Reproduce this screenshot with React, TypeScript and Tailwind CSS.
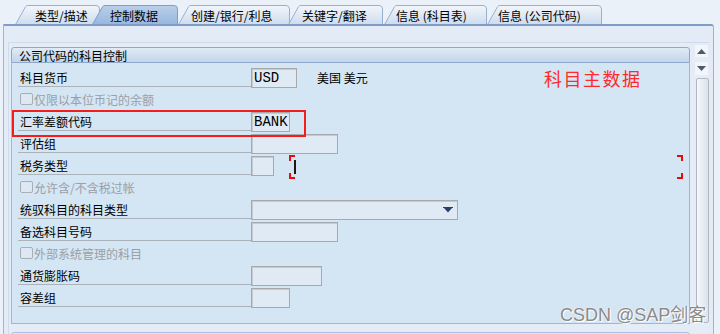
import type { ReactNode } from "react";

type Tab = { label: string; w: number; cls: string; pl: string; active?: boolean };

const tabs: Tab[] = [
  { label: "类型/描述", w: 85, cls: "w-[85px]", pl: "pl-[20px]" },
  { label: "控制数据", w: 86, cls: "w-[86px] -ml-[8px] z-10", pl: "pl-[18px]", active: true },
  { label: "创建/银行/利息", w: 112, cls: "w-[112px]", pl: "pl-[13px]" },
  { label: "关键字/翻译", w: 95, cls: "w-[95px] -ml-[2px]", pl: "pl-[14px]" },
  { label: "信息 (科目表)", w: 103, cls: "w-[103px] ml-[1px]", pl: "pl-[12px]" },
  { label: "信息 (公司代码)", w: 115, cls: "w-[115px]", pl: "pl-[11px]" },
];

type Row =
  | { kind: "field"; label: string; box: string; value?: string; select?: boolean; after?: ReactNode }
  | { kind: "check"; label: string };

const rows: Row[] = [
  { kind: "field", label: "科目货币", box: "w-[46px]", value: "USD", after: <span className="ml-[20px] self-center pt-[3px]">美国 美元</span> },
  { kind: "check", label: "仅限以本位币记的余额" },
  { kind: "field", label: "汇率差额代码", box: "w-[39px]", value: "BANK" },
  { kind: "field", label: "评估组", box: "w-[87px]" },
  { kind: "field", label: "税务类型", box: "w-[23px]" },
  { kind: "check", label: "允许含/不含税过帐" },
  { kind: "field", label: "统驭科目的科目类型", box: "w-[207px]", select: true },
  { kind: "field", label: "备选科目号码", box: "w-[87px]" },
  { kind: "check", label: "外部系统管理的科目" },
  { kind: "field", label: "通货膨胀码", box: "w-[71px]" },
  { kind: "field", label: "容差组", box: "w-[39px]" },
];

function TabItem({ tab }: { tab: Tab }) {
  const w = tab.w;
  const grad = tab.active ? "tabOn" : "tabOff";
  return (
    <div className={`relative h-[19px] shrink-0 ${tab.cls}`}>
      <svg className="absolute inset-0" width={w} height="19" viewBox={`0 0 ${w} 19`}>
        <path
          d={`M0.5 19.5 L10.5 1.8 Q11.3 0.5 13 0.5 L${w - 4} 0.5 Q${w - 0.5} 0.5 ${w - 0.5} 4 L${w - 0.5} 19.5 Z`}
          fill={`url(#${grad})`}
          stroke={tab.active ? "#7f9dc7" : "#98b0cf"}
        />
      </svg>
      <span className={`relative block leading-[19px] pt-[1px] text-[12px] text-black ${tab.pl}`}>{tab.label}</span>
    </div>
  );
}

function Field({ row }: { row: Extract<Row, { kind: "field" }> }) {
  return (
    <div className="flex items-end h-[22px]">
      <div className="w-[233px] ml-[6px] h-[21px] border-b border-[#acb2b9] pl-[2px] leading-[20px] pt-[2px]">{row.label}</div>
      <div
        className={`relative h-[20px] -mb-[1px] border border-[#a7a9ac] bg-[#dfeaf5] shadow-[inset_1px_1px_0_#c5cad0] pl-[2px] font-['Liberation_Mono',monospace] text-[14px] leading-[18px] ${row.box}`}
      >
        {row.value}
        {row.select && (
          <svg className="absolute right-[4px] top-[6px]" width="10" height="6" viewBox="0 0 10 6">
            <rect x="0" y="0" width="10" height="1" fill="#2c3e6a" />
            <path d="M1 1 L9 1 L5 5.5 Z" fill="#2c3e6a" />
          </svg>
        )}
      </div>
      {row.after}
    </div>
  );
}

function Check({ label }: { label: string }) {
  return (
    <div className="flex items-center h-[22px] pl-[8px] pt-[2px]">
      <div className="w-[13px] h-[12px] rounded-[2px] border border-[#a9aeb5] bg-[#dde8f3]" />
      <span className="ml-[1px] text-[#9aa0a7] leading-[20px] pt-[1px]">{label}</span>
    </div>
  );
}

function Arrow({ up }: { up?: boolean }) {
  return (
    <svg width="9" height="5" viewBox="0 0 9 5">
      <path d={up ? "M0 5 L9 5 L4.5 0 Z" : "M0 0 L9 0 L4.5 5 Z"} fill="#4c5a6a" />
    </svg>
  );
}

export default function App() {
  return (
    <div className="relative w-[720px] h-[334px] overflow-hidden bg-[#eaf1f8] font-['Noto_Sans_CJK_SC',sans-serif] text-[12px] text-black">
      <svg width="0" height="0" className="absolute">
        <defs>
          <linearGradient id="tabOff" x1="0" y1="0" x2="0" y2="1">
            <stop offset="0" stopColor="#f2f6fb" />
            <stop offset="1" stopColor="#cddcee" />
          </linearGradient>
          <linearGradient id="tabOn" x1="0" y1="0" x2="0" y2="1">
            <stop offset="0" stopColor="#b9cfe9" />
            <stop offset="1" stopColor="#98b7de" />
          </linearGradient>
        </defs>
      </svg>

      {/* tabs */}
      <div className="flex items-end h-[24px] pl-[15px]">
        {tabs.map(t => (
          <TabItem key={t.label} tab={t} />
        ))}
      </div>

      {/* panel */}
      <div className="ml-[3px] w-[711px] h-[310px] border-t-2 border-t-[#7f9dc7] border-x border-x-[#9db4d3] rounded-tr-[3px] bg-[#e3ecf6] pt-[16px] pl-[4px] pr-[4px]">
        <div className="flex h-full border-t border-l border-[#cddbeb] bg-[#e4edf7]">
          <div className="flex-1 pl-[2px] pt-[4px]">
            <div className="h-[16px] border border-[#8ea9cd] rounded-t-[3px] bg-gradient-to-b from-[#e0ebf6] to-[#c2d5ea] pl-[7px] leading-[14px] pt-[1px]">
              公司代码的科目控制
            </div>
            <div className="border-x border-b border-[#9fb6d4] bg-[#d4e5f3] pt-[2px] pb-[16px]">
              {rows.map(r => (r.kind === "field" ? <Field key={r.label} row={r} /> : <Check key={r.label} label={r.label} />))}
            </div>
            <div className="mt-[8px] h-[20px] border border-[#a9bfdb] rounded-t-[3px] bg-[#dde9f5]" />
          </div>

          {/* scrollbar */}
          <div className="w-[19px] pl-[4px] pt-[1px] flex flex-col">
            <div className="h-[14px] w-[15px] bg-[#f2f6fa] border border-[#e6ecf2] flex items-center justify-center">
              <Arrow up />
            </div>
            <div className="mt-[3px] h-[15px] w-[15px] bg-[#f2f6fa] border border-[#e6ecf2] flex items-center justify-center">
              <Arrow />
            </div>
            <div className="mt-[2px] ml-[2px] w-[13px] h-[245px] border border-[#b2b8bf] rounded-[2px] bg-gradient-to-r from-[#f5f8fb] to-[#dbe3ed]" />
          </div>
        </div>
      </div>

      {/* annotations */}
      <div className="absolute left-[12px] top-[110px] w-[294px] h-[27px] border-2 border-[#f41c1c]" />
      <div className="absolute left-[544px] top-[66px] text-[18px] leading-[24px] tracking-[1.5px] text-[#ff2a2a]">科目主数据</div>
      <div className="absolute left-[289px] top-[155px] w-[6px] h-[6px] border-l-2 border-t-2 border-[#e50c0c]" />
      <div className="absolute left-[289px] top-[173px] w-[6px] h-[6px] border-l-2 border-b-2 border-[#e50c0c]" />
      <div className="absolute left-[677px] top-[155px] w-[6px] h-[6px] border-r-2 border-t-2 border-[#e50c0c]" />
      <div className="absolute left-[677px] top-[173px] w-[6px] h-[6px] border-r-2 border-b-2 border-[#e50c0c]" />
      <div className="absolute left-[294px] top-[160px] w-[2px] h-[14px] bg-[#231815]" />
      <div className="absolute left-[560px] top-[303px] text-[18px] leading-[24px] text-[#8a8a8a] font-['Liberation_Sans','Noto_Sans_CJK_SC',sans-serif] [text-shadow:0_0_2px_#fff,1px_1px_0_#fff]">
        CSDN @SAP剑客
      </div>
    </div>
  );
}
